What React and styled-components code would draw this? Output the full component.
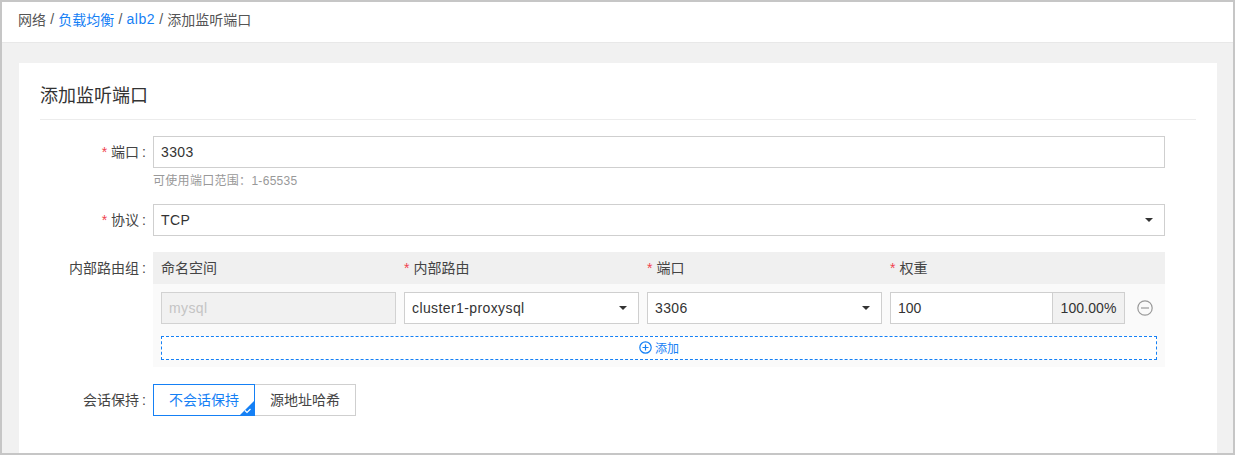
import styled, { createGlobalStyle } from "styled-components";

const Global = createGlobalStyle`
  html, body {
    margin: 0;
    padding: 0;
    background: #fff;
  }
  body {
    font-family: "Liberation Sans", "Noto Sans CJK SC", sans-serif;
    font-size: 14px;
    color: #333;
  }
`;

const Page = styled.div`
  box-sizing: border-box;
  width: 1235px;
  height: 455px;
  overflow: hidden;
  border: 2px solid #c6c6c6;
  background: #f1f1f1;
  display: flex;
  flex-direction: column;
`;

const Breadcrumb = styled.div`
  box-sizing: border-box;
  height: 41px;
  flex: none;
  padding: 0 16px 6px;
  display: flex;
  align-items: center;
  gap: 4.2px;
  background: #fff;
  border-bottom: 1px solid #e8e8e8;
  font-size: 14px;
  color: #555;
`;

const Crumb = styled.span`
  color: ${(p) => (p.$link ? "#1580f5" : "#555")};
`;

const Latin = styled.span`
  letter-spacing: 0.5px;
`;

const Card = styled.div`
  flex: 1;
  margin: 20px 16px 0 17px;
  padding: 19px 21px 0;
  background: #fff;
  min-height: 0;
`;

const Title = styled.h2`
  box-sizing: border-box;
  margin: 0 0 16px;
  height: 38px;
  font-size: 18px;
  line-height: 28px;
  font-weight: 400;
  color: #333;
  border-bottom: 1px solid #ececec;
`;

const Row = styled.div`
  display: flex;
  align-items: flex-start;
  margin-bottom: ${(p) => p.$gap ?? 16}px;
`;

const Label = styled.label`
  box-sizing: border-box;
  flex: none;
  width: 113px;
  padding-right: 7px;
  height: 32px;
  line-height: 32px;
  text-align: right;
  white-space: nowrap;
  font-size: 14px;
  color: #444;
`;

const Colon = styled.span`
  margin-left: 3px;
`;

const Star = styled.span`
  color: #f0434f;
  margin-right: 4px;
`;

const Field = styled.div`
  flex: none;
  width: 1012px;
`;

const Box = styled.div`
  box-sizing: border-box;
  height: 32px;
  padding: 0 7px;
  display: flex;
  align-items: center;
  justify-content: space-between;
  border: 1px solid ${(p) => (p.$disabled ? "#d2d2d2" : "#cfcfcf")};
  background: ${(p) => (p.$disabled ? "#f1f1f1" : "#fff")};
  color: ${(p) => (p.$disabled ? "#c4c4c4" : "#333")};
  font-size: 14px;
  letter-spacing: 0.4px;
`;

const Caret = styled.span`
  width: 0;
  height: 0;
  margin-right: 4px;
  border-left: 4px solid transparent;
  border-right: 4px solid transparent;
  border-top: 4px solid #333;
`;

const Hint = styled.div`
  margin-top: 3px;
  height: 20px;
  line-height: 20px;
  font-size: 12px;
  letter-spacing: 0.3px;
  color: #999;
`;

const GroupHead = styled.div`
  box-sizing: border-box;
  height: 32px;
  padding: 0 8px 2px;
  display: grid;
  grid-template-columns: repeat(4, 235px);
  column-gap: 8px;
  align-items: center;
  background: #f0f0f0;
  font-size: 14px;
  color: #444;
`;

const GroupBody = styled.div`
  box-sizing: border-box;
  height: 83px;
  padding: 8px 8px 0;
  background: #fafafa;
`;

const GroupRow = styled.div`
  display: grid;
  grid-template-columns: repeat(4, 235px) 1fr;
  column-gap: 8px;
  align-items: center;
  margin-bottom: 12px;
`;

const WeightWrap = styled.div`
  box-sizing: border-box;
  height: 32px;
  display: flex;
  border: 1px solid #cfcfcf;
  background: #fff;
  font-size: 14px;
`;

const WeightInput = styled.div`
  flex: 1;
  padding: 0 7px;
  line-height: 30px;
  color: #333;
`;

const WeightAddon = styled.div`
  flex: none;
  width: 71px;
  text-align: center;
  line-height: 30px;
  letter-spacing: 0.1px;
  background: #f1f1f1;
  border-left: 1px solid #cfcfcf;
  color: #333;
`;

const RemoveBtn = styled.div`
  display: flex;
  justify-content: center;
`;

const AddBtn = styled.div`
  box-sizing: border-box;
  height: 24px;
  padding-bottom: 1px;
  display: flex;
  align-items: center;
  justify-content: center;
  gap: 3px;
  border: 1px dashed #1580f5;
  background: #fff;
  color: #1580f5;
  font-size: 12px;
`;

const Segments = styled.div`
  display: flex;
`;

const Segment = styled.div`
  box-sizing: border-box;
  position: relative;
  width: ${(p) => p.$width}px;
  height: 32px;
  line-height: 30px;
  text-align: center;
  font-size: 14px;
  border: 1px solid ${(p) => (p.$active ? "#1580f5" : "#cfcfcf")};
  border-left-width: ${(p) => (p.$active ? 1 : 0)}px;
  color: ${(p) => (p.$active ? "#1580f5" : "#444")};
`;

const Corner = styled.svg`
  position: absolute;
  right: -1px;
  bottom: -1px;
`;

function MinusIcon() {
  return (
    <svg width="16" height="16" viewBox="0 0 16 16" fill="none" stroke="#999" strokeWidth="1.2">
      <circle cx="8" cy="8" r="7.2" />
      <path d="M4 8h8" />
    </svg>
  );
}

function PlusIcon() {
  return (
    <svg width="13" height="13" viewBox="0 0 13 13" fill="none" stroke="#1580f5" strokeWidth="1.2">
      <circle cx="6.5" cy="6.5" r="5.7" />
      <path d="M3.5 6.5h6M6.5 3.5v6" />
    </svg>
  );
}

export default function App() {
  return (
    <>
      <Global />
      <Page>
        <Breadcrumb>
          <Crumb>网络</Crumb>
          <Crumb>/</Crumb>
          <Crumb $link>负载均衡</Crumb>
          <Crumb>/</Crumb>
          <Crumb $link><Latin>alb2</Latin></Crumb>
          <Crumb>/</Crumb>
          <Crumb>添加监听端口</Crumb>
        </Breadcrumb>
        <Card>
          <Title>添加监听端口</Title>
          <Row $gap={13}>
            <Label><Star>*</Star>端口<Colon>:</Colon></Label>
            <Field>
              <Box>3303</Box>
              <Hint>可使用端口范围：1-65535</Hint>
            </Field>
          </Row>
          <Row>
            <Label><Star>*</Star>协议<Colon>:</Colon></Label>
            <Field>
              <Box>TCP<Caret /></Box>
            </Field>
          </Row>
          <Row $gap={17}>
            <Label>内部路由组<Colon>:</Colon></Label>
            <Field>
              <GroupHead>
                <span>命名空间</span>
                <span><Star>*</Star>内部路由</span>
                <span><Star>*</Star>端口</span>
                <span><Star>*</Star>权重</span>
              </GroupHead>
              <GroupBody>
                <GroupRow>
                  <Box $disabled>mysql</Box>
                  <Box>cluster1-proxysql<Caret /></Box>
                  <Box>3306<Caret /></Box>
                  <WeightWrap>
                    <WeightInput>100</WeightInput>
                    <WeightAddon>100.00%</WeightAddon>
                  </WeightWrap>
                  <RemoveBtn><MinusIcon /></RemoveBtn>
                </GroupRow>
                <AddBtn><PlusIcon />添加</AddBtn>
              </GroupBody>
            </Field>
          </Row>
          <Row>
            <Label>会话保持<Colon>:</Colon></Label>
            <Segments>
              <Segment $active $width={102}>
                不会话保持
                <Corner width="16" height="16" viewBox="0 0 16 16">
                  <path d="M16 0V16H0Z" fill="#1580f5" />
                  <path d="M6 10.5l2 2 3.5-3.5" fill="none" stroke="#fff" strokeWidth="1.2" />
                </Corner>
              </Segment>
              <Segment $width={101}>源地址哈希</Segment>
            </Segments>
          </Row>
        </Card>
      </Page>
    </>
  );
}
